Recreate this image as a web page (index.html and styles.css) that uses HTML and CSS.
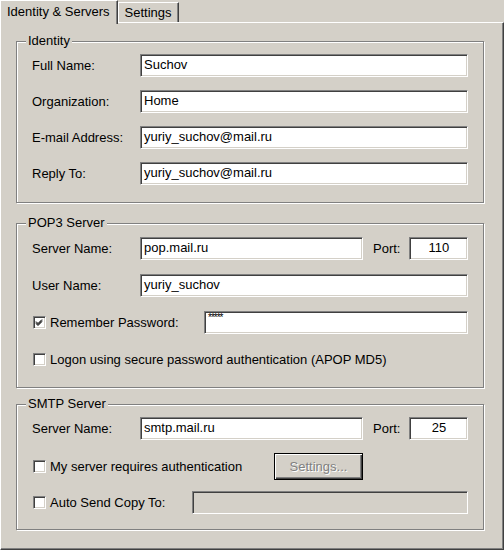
FILE: index.html
```html
<!DOCTYPE html>
<html lang="en">
<head>
  <meta charset="UTF-8">
  <title>Account Properties</title>
  <link rel="stylesheet" href="styles.css">
</head>
<body>

  <div class="tabs">
    <div class="tab active">Identity &amp; Servers</div>
    <div class="tab">Settings</div>
  </div>

  <div class="panel">

    <fieldset class="group group-identity">
      <legend>Identity</legend>
      <div class="row">
        <span class="label">Full Name:</span>
        <div class="field">Suchov</div>
      </div>
      <div class="row">
        <span class="label">Organization:</span>
        <div class="field">Home</div>
      </div>
      <div class="row">
        <span class="label">E-mail Address:</span>
        <div class="field">yuriy_suchov@mail.ru</div>
      </div>
      <div class="row">
        <span class="label">Reply To:</span>
        <div class="field">yuriy_suchov@mail.ru</div>
      </div>
    </fieldset>

    <fieldset class="group group-pop">
      <legend>POP3 Server</legend>
      <div class="row">
        <span class="label">Server Name:</span>
        <div class="field field-host">pop.mail.ru</div>
        <span class="port-label">Port:</span>
        <div class="field field-port">110</div>
      </div>
      <div class="row">
        <span class="label">User Name:</span>
        <div class="field">yuriy_suchov</div>
      </div>
      <div class="row">
        <span class="check-label w-password"><span class="check checked"></span>Remember Password:</span>
        <div class="field field-password">*****</div>
      </div>
      <div class="row">
        <span class="check-label"><span class="check"></span>Logon using secure password authentication (APOP MD5)</span>
      </div>
    </fieldset>

    <fieldset class="group group-smtp">
      <legend>SMTP Server</legend>
      <div class="row">
        <span class="label">Server Name:</span>
        <div class="field field-host">smtp.mail.ru</div>
        <span class="port-label">Port:</span>
        <div class="field field-port">25</div>
      </div>
      <div class="row row-button">
        <span class="check-label w-auth"><span class="check"></span>My server requires authentication</span>
        <button class="btn" disabled>Settings...</button>
      </div>
      <div class="row row-copy">
        <span class="check-label w-copy"><span class="check"></span>Auto Send Copy To:</span>
        <div class="field disabled"></div>
      </div>
    </fieldset>

  </div>

</body>
</html>
```

FILE: styles.css
```css
* {
  box-sizing: border-box;
}

body {
  margin: 0;
  width: 504px;
  height: 550px;
  background: #d4d0c8;
  font-family: 'Liberation Sans', Arial, sans-serif;
  font-size: 13px;
  color: #000;
  overflow: hidden;
}

/* tabs */
.tabs {
  display: flex;
  align-items: flex-start;
  height: 22px;
}

.tab {
  position: relative;
  height: 20px;
  margin-top: 2px;
  padding: 0 6px;
  line-height: 20px;
  background: #d4d0c8;
  border-top: 1px solid #fff;
  border-left: 1px solid #fff;
  border-right: 1px solid #404040;
  box-shadow: inset -1px 0 0 #808080;
}

.tab.active {
  z-index: 1;
  height: 24px;
  margin-top: 0;
  padding: 0 7px 0 6px;
  line-height: 22px;
}

/* page body */
.panel {
  height: 528px;
  padding: 10px 18px 0 15px;
  border-top: 1px solid #fff;
  border-left: 1px solid #fff;
  border-right: 1px solid #404040;
  border-bottom: 1px solid #404040;
  box-shadow: inset -1px -1px 0 #808080;
}

.group {
  width: 468px;
  margin: 0 0 12px 0;
  padding: 5px 15px 18px 15px;
  border: 1px solid #808080;
  box-shadow: 1px 1px 0 #fff, inset 1px 1px 0 #fff;
  display: flex;
  flex-direction: column;
  gap: 13px;
}

.group legend {
  margin-left: -6px;
  padding: 0 2px;
  line-height: 16px;
  background: #d4d0c8;
}

.group-identity {
  padding-bottom: 17px;
}

.group-pop {
  padding-top: 6px;
  padding-bottom: 16px;
  margin-bottom: 8px;
  gap: 14px;
}

.group-smtp {
  padding-bottom: 15px;
}

.row {
  display: flex;
  align-items: center;
  height: 23px;
}

.row-button {
  height: 27px;
}

.row-copy {
  margin-top: -2px;
}

.label {
  width: 108px;
  flex: none;
}

/* sunken edit box */
.field {
  flex: 1;
  height: 23px;
  padding: 0 3px;
  line-height: 20px;
  background: #fff;
  white-space: nowrap;
  border-top: 1px solid #808080;
  border-left: 1px solid #808080;
  border-right: 1px solid #fff;
  border-bottom: 1px solid #fff;
  box-shadow: inset 1px 1px 0 #404040, inset -1px -1px 0 #d4d0c8;
}

.field.disabled {
  background: #d4d0c8;
}

.field-host {
  flex: none;
  width: 223px;
}

.port-label {
  margin: 0 9px 0 10px;
}

.field-port {
  flex: none;
  width: 59px;
  text-align: center;
}

.field-password {
  font-size: 10px;
  line-height: 11px;
  letter-spacing: -1px;
}

/* checkboxes */
.check-label {
  display: flex;
  align-items: center;
  flex: none;
  padding-left: 1px;
}

.w-password {
  width: 172px;
}

.w-auth {
  width: 242px;
}

.w-copy {
  width: 160px;
}

.check {
  width: 13px;
  height: 13px;
  margin-right: 4px;
  background: #fff;
  border-top: 1px solid #808080;
  border-left: 1px solid #808080;
  border-right: 1px solid #fff;
  border-bottom: 1px solid #fff;
  box-shadow: inset 1px 1px 0 #404040, inset -1px -1px 0 #d4d0c8;
}

.check.checked {
  background: #fff url("data:image/svg+xml,%3Csvg xmlns='http://www.w3.org/2000/svg' width='11' height='11'%3E%3Cpath d='M2 4.5 L4 6.5 L8 2.5 M2 5.5 L4 7.5 L8 3.5 M2 6.5 L4 8.5 L8 4.5' fill='none' stroke='%23000' stroke-width='1'/%3E%3C/svg%3E") no-repeat 0 0;
}

/* push button */
.btn {
  width: 89px;
  height: 27px;
  padding: 0;
  font: inherit;
  color: #808080;
  text-shadow: 1px 1px 0 #fff;
  background: #d4d0c8;
  border: 1px solid #000;
  box-shadow: inset 1px 1px 0 #fff, inset -1px -1px 0 #404040, inset -2px -2px 0 #808080;
}
```
